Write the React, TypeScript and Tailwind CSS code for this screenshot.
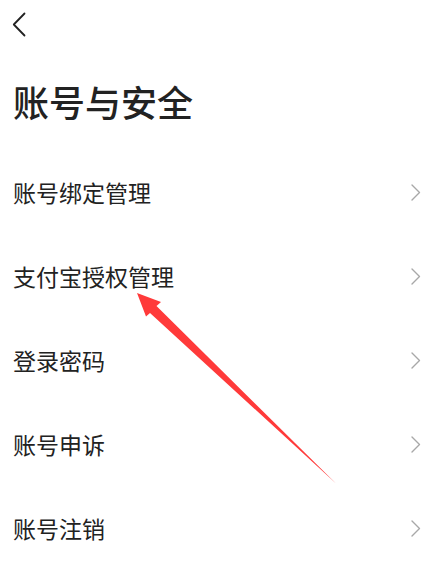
import React from 'react';

const items = ['账号绑定管理', '支付宝授权管理', '登录密码', '账号申诉', '账号注销'];

const font = { fontFamily: '"Noto Sans CJK SC", "Noto Sans", sans-serif' };

export default function App() {
  return (
    <div className="relative w-[443px] h-[562px] bg-white overflow-hidden text-[#222]" style={font}>
      {/* Header */}
      <div className="h-[50px] pl-[12px] pt-[12px]">
        <svg width="14" height="25" viewBox="0 0 14 25" fill="none">
          <path d="M12.5 1.5 L1.8 12.5 L12.5 23.5" stroke="#222" strokeWidth="1.8" strokeLinecap="round" strokeLinejoin="round" />
        </svg>
      </div>
      <div className="h-[100px] pl-[13px] pt-[27px]">
        <h1 className="text-[36px] leading-[48px] font-medium">账号与安全</h1>
      </div>

      {/* List */}
      <div className="flex flex-col">
        {items.map((label) => (
          <div key={label} className="h-[84px] flex items-center justify-between pl-[13px] pr-[22px]">
            <span className="text-[23px] leading-none">{label}</span>
            <svg width="10" height="17" viewBox="0 0 10 17" fill="none">
              <path d="M1 1 L8.5 8.5 L1 16" stroke="#a8a8a8" strokeWidth="1.4" strokeLinecap="round" strokeLinejoin="round" />
            </svg>
          </div>
        ))}
      </div>

      {/* Annotation arrow */}
      <svg className="absolute inset-0 pointer-events-none" width="443" height="562" viewBox="0 0 443 562">
        <polygon points="137,293 161,302 156.5,306 336,483.5 150,313 146,316.5" fill="#ff3a3a" />
      </svg>
    </div>
  );
}
